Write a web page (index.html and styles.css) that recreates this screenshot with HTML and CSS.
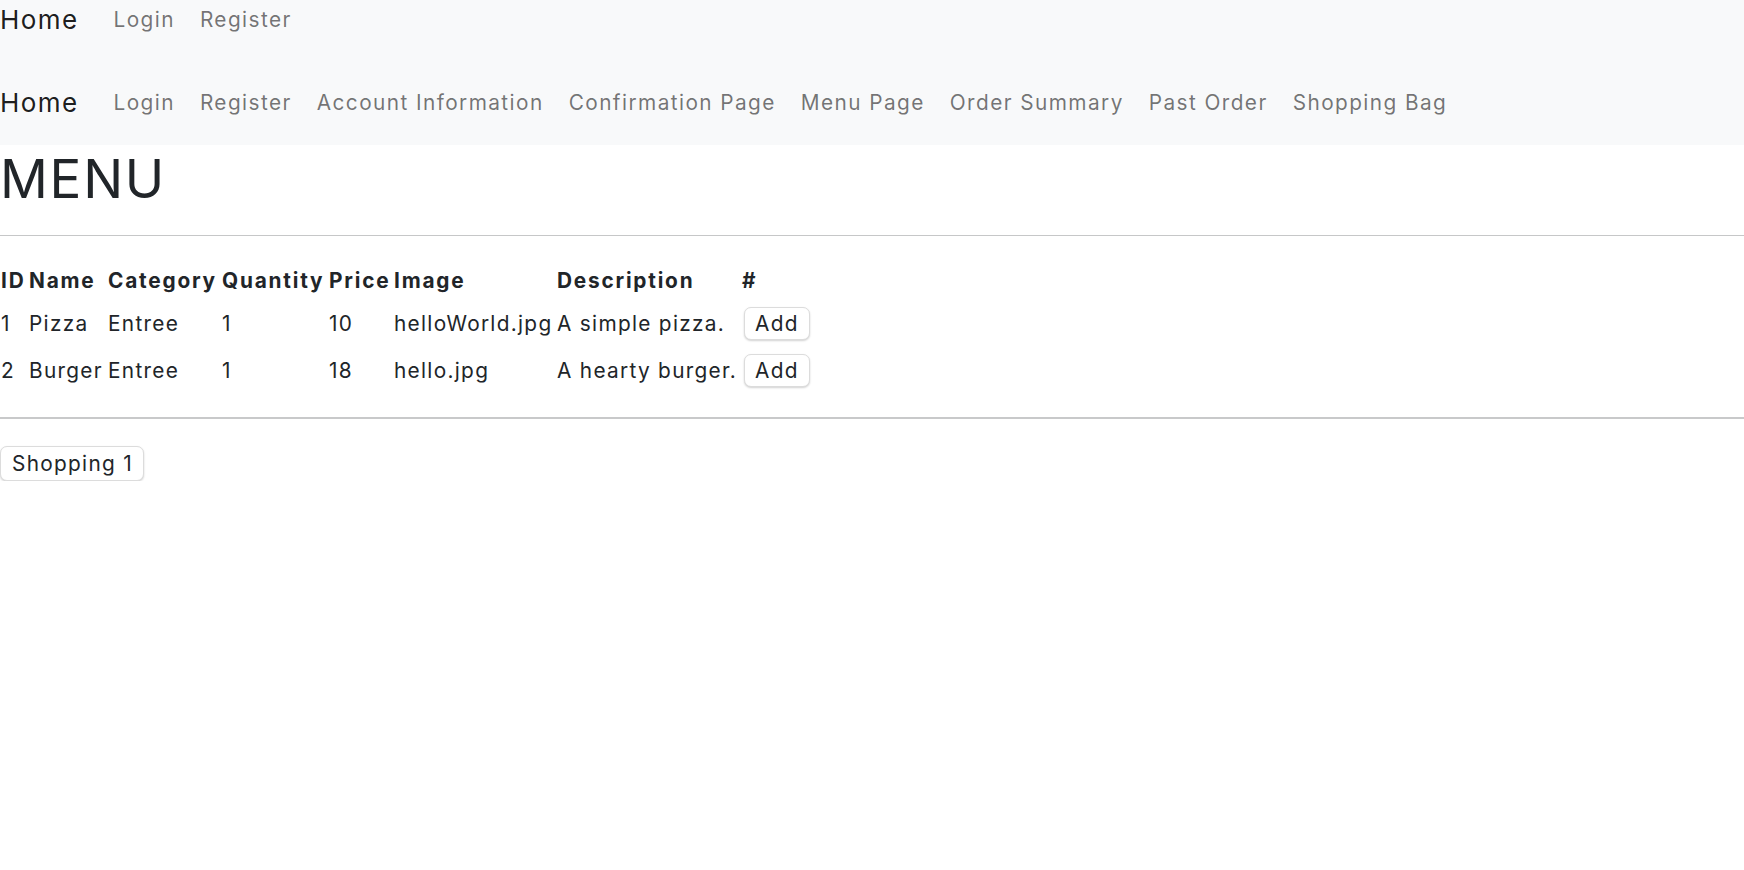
FILE: index.html
```html
<!DOCTYPE html>
<html lang="en">
<head>
<meta charset="utf-8">
<title>Menu</title>
<link rel="stylesheet" href="styles.css">
</head>
<body>
<header class="site-header">
  <nav class="navbar navbar-top">
    <a class="brand" href="#">Home</a>
    <ul class="nav-list">
      <li><a class="nav-link" href="#">Login</a></li>
      <li><a class="nav-link" href="#">Register</a></li>
    </ul>
  </nav>
  <nav class="navbar navbar-main">
    <a class="brand" href="#">Home</a>
    <ul class="nav-list">
      <li><a class="nav-link" href="#">Login</a></li>
      <li><a class="nav-link" href="#">Register</a></li>
      <li><a class="nav-link" href="#">Account Information</a></li>
      <li><a class="nav-link" href="#">Confirmation Page</a></li>
      <li><a class="nav-link" href="#">Menu Page</a></li>
      <li><a class="nav-link" href="#">Order Summary</a></li>
      <li><a class="nav-link" href="#">Past Order</a></li>
      <li><a class="nav-link" href="#">Shopping Bag</a></li>
    </ul>
  </nav>
</header>
<main class="content">
  <h1 class="title">MENU</h1>
  <hr class="rule rule-top">
  <table class="menu-table">
    <colgroup>
      <col class="c-id"><col class="c-name"><col class="c-cat"><col class="c-qty"><col class="c-price"><col class="c-img"><col class="c-desc"><col class="c-act">
    </colgroup>
    <thead>
      <tr><th>ID</th><th>Name</th><th>Category</th><th>Quantity</th><th>Price</th><th>Image</th><th>Description</th><th>#</th></tr>
    </thead>
    <tbody>
      <tr><td>1</td><td>Pizza</td><td>Entree</td><td>1</td><td>10</td><td>helloWorld.jpg</td><td>A simple pizza.</td><td class="act"><button class="btn">Add</button></td></tr>
      <tr><td>2</td><td>Burger</td><td>Entree</td><td>1</td><td>18</td><td>hello.jpg</td><td>A hearty burger.</td><td class="act"><button class="btn">Add</button></td></tr>
    </tbody>
  </table>
  <hr class="rule rule-bottom">
  <button class="btn btn-cart">Shopping 1</button>
</main>
</body>
</html>
```
FILE: styles.css
```css
* { box-sizing: border-box; }
html, body { margin: 0; padding: 0; }
body {
  font-family: Inter, "Noto Sans", "Liberation Sans", sans-serif;
  font-size: 20.8px;
  line-height: 1.5;
  letter-spacing: 1.3px;
  color: #212529;
  background: #fff;
}
a { text-decoration: none; }

.site-header { background: #f8f9fa; }

.navbar {
  display: flex;
  align-items: center;
}
.navbar-top { height: 40px; }
.navbar-main { padding: 43px 0 22px; }

.brand {
  font-size: 26px;
  color: rgba(0,0,0,.9);
  margin-right: 22px;
  line-height: 38px;
  letter-spacing: 1.4px;
}
.navbar-main .brand { line-height: 40px; }
.nav-list {
  display: flex;
  list-style: none;
  margin: 0;
  padding: 0;
}
.nav-link {
  display: block;
  padding: 0 12px 0 13px;
  color: rgba(0,0,0,.55);
  line-height: 40px;
  letter-spacing: 1.42px;
}

.content { padding: 0; }
.title {
  margin: 0;
  padding-top: 3px;
  font-size: 53px;
  font-weight: 400;
  line-height: 62px;
  letter-spacing: 1.7px;
  color: #212529;
}
.rule {
  border: 0;
  margin: 0;
  background: #c6c7c8;
}
.rule-top { height: 1px; margin: 25px 0 27px; }
.rule-bottom { height: 2px; margin: 22px 0 27px; background: #c8c9ca; }

.menu-table {
  border-collapse: collapse;
  white-space: nowrap;
}
.menu-table th, .menu-table td {
  text-align: left;
  vertical-align: baseline;
  line-height: 31px;
}
.menu-table th {
  font-weight: 700;
  letter-spacing: 1.8px;
  padding: 2px 1px 5px 1px;
}
.menu-table td { padding: 6px 1px 8px 1px; }
.menu-table td.act { padding-left: 3px; }

.c-id { width: 28px; }
.c-name { width: 79px; }
.c-cat { width: 114px; }
.c-qty { width: 107px; }
.c-price { width: 65px; }
.c-img { width: 163px; }
.c-desc { width: 185px; }

.btn {
  font: inherit;
  font-size: 20.8px;
  line-height: 31px;
  letter-spacing: 1.3px;
  color: #212529;
  background: #fff;
  border: 1px solid #dcdcdc;
  border-radius: 7px;
  box-shadow: 0 1px 2px rgba(0,0,0,.18);
  padding: 0 10px 0 10px;
  margin: 0;
}
.btn-cart { padding: 1px 10px 1px 11px; }
```
